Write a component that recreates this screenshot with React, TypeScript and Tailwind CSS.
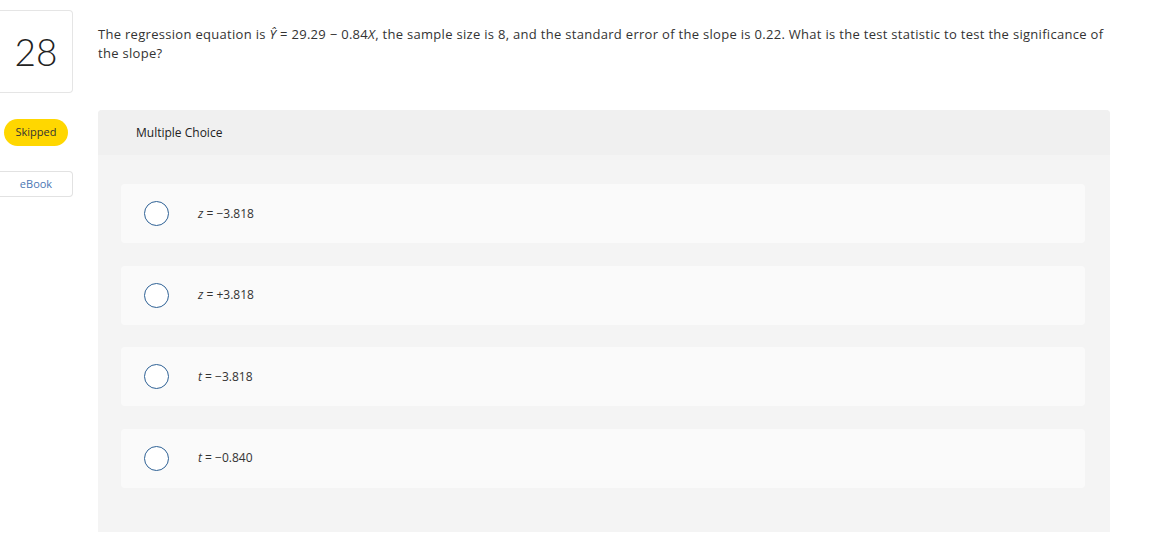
const choices = [
  { v: "z", rest: "= −3.818" },
  { v: "z", rest: "= +3.818" },
  { v: "t", rest: "= −3.818" },
  { v: "t", rest: "= −0.840" },
];

function Radio() {
  return <span className="block h-[25px] w-[25px] shrink-0 rounded-full border-[1.5px] border-[#2e6195] bg-white" />;
}

export default function App() {
  return (
    <div className="flex min-h-[535px] w-[1164px] bg-white text-[#333] [font-family:'Open_Sans',Lato,sans-serif]">
      <aside className="flex w-[98px] shrink-0 flex-col">
        <div className="mt-[10px] flex h-[83px] w-[73px] items-center justify-center rounded-r-[4px] border border-l-0 border-[#e5e5e5]">
          <span className="text-[37px] font-light leading-none text-[#222] [font-family:Lato,sans-serif]">28</span>
        </div>
        <span className="ml-[4px] mt-[26px] flex h-[27px] w-[64px] items-center justify-center rounded-full bg-[#ffd700] text-[11px] text-[#333]">
          Skipped
        </span>
        <div className="mt-[25px] flex h-[26px] w-[73px] items-center justify-center rounded-r-[4px] border border-l-0 border-[#e2e2e2] text-[11px] text-[#4a77b4]">
          eBook
        </div>
      </aside>
      <main className="flex w-[1012px] flex-col">
        <p className="mt-[25px] text-[13px] leading-[19px] tracking-[0.3px]">
          The regression equation is <span className="italic">Ŷ</span> = 29.29 − 0.84<span className="italic">X</span>, the
          sample size is 8, and the standard error of the slope is 0.22. What is the test statistic to test the significance of
          the slope?
        </p>
        <section className="mt-[47px] mb-[3px] flex flex-1 flex-col rounded-t-[4px] bg-[#f4f4f4]">
          <div className="flex h-[45px] items-center rounded-t-[4px] bg-[#f0f0f0] pl-[38px] text-[12px] text-[#222]">
            Multiple Choice
          </div>
          <div className="flex flex-col gap-[22.5px] px-[23px] pt-[29px]">
            {choices.map((c, i) => (
              <div key={i} className="flex h-[59px] w-[964px] items-center rounded-[4px] bg-[#fafafa] pl-[23px]">
                <Radio />
                <span className="ml-[29px] text-[12px] text-[#333]">
                  <span className="italic">{c.v}</span> {c.rest}
                </span>
              </div>
            ))}
          </div>
        </section>
      </main>
    </div>
  );
}
